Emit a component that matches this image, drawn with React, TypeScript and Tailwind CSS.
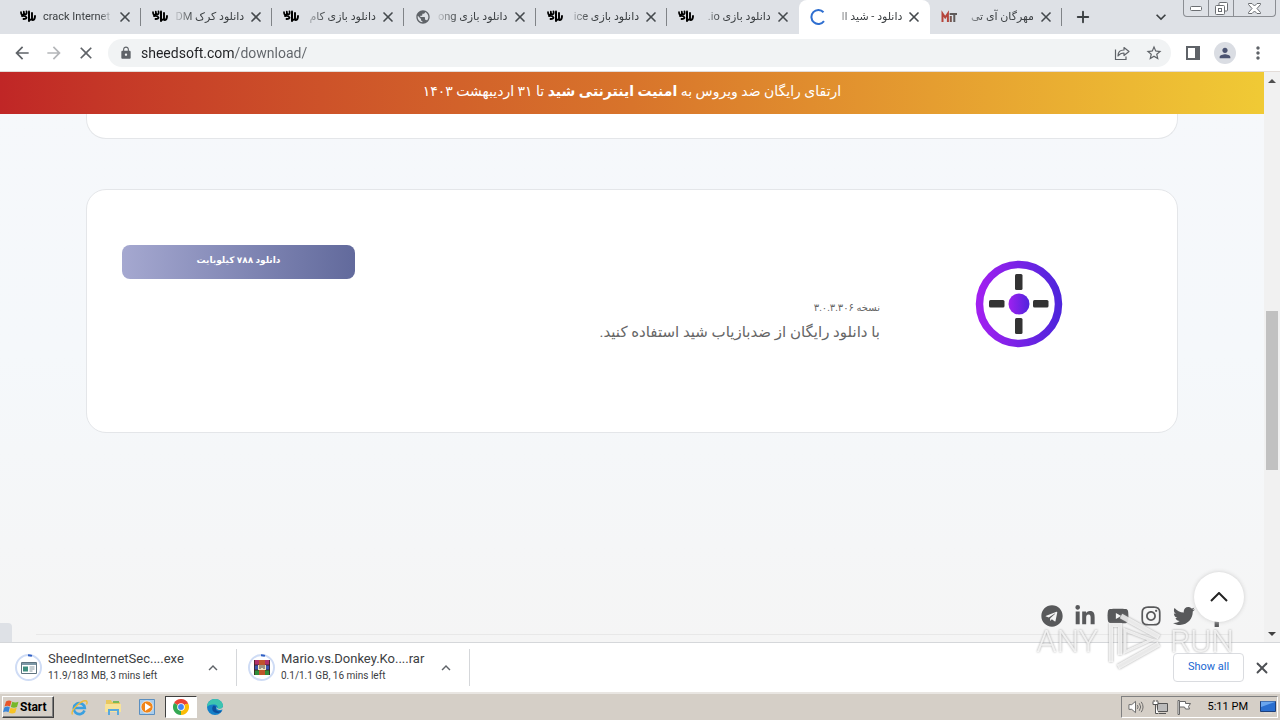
import React from "react";
import {
  MdArrowBack,
  MdArrowForward,
  MdClose,
  MdKeyboardArrowDown,
  MdKeyboardArrowUp,
  MdLock,
  MdMoreVert,
  MdPerson,
  MdPublic,
  MdStarBorder,
} from "react-icons/md";
import {
  FaFacebookF,
  FaInstagram,
  FaLinkedinIn,
  FaTelegram,
  FaTwitter,
  FaYoutube,
} from "react-icons/fa";
import { Plus, X } from "lucide-react";

const tabs = [
  { title: "crack Internet", icon: "yas", dir: "ltr" },
  { title: "دانلود کرک DM", icon: "yas", dir: "rtl" },
  { title: "دانلود بازی کام", icon: "yas", dir: "rtl" },
  { title: "دانلود بازی ong", icon: "globe", dir: "rtl" },
  { title: "دانلود بازی ice", icon: "yas", dir: "rtl" },
  { title: "دانلود بازی io.", icon: "yas", dir: "rtl" },
  { title: "دانلود - شید اا", icon: "spinner", dir: "rtl", active: true },
  { title: "مهرگان آی تی", icon: "mit", dir: "rtl" },
];

function TabIcon({ name }: { name: string }) {
  if (name === "globe") return <MdPublic className="size-4 shrink-0 text-[#5f6368]" />;
  if (name === "spinner") {
    return (
      <svg viewBox="0 0 16 16" className="size-4 shrink-0" fill="none">
        <path d="M13.5 3.2A7 7 0 1 0 14 12.2" stroke="#2f6fd0" strokeWidth="2" />
      </svg>
    );
  }
  if (name === "mit") {
    return (
      <svg viewBox="0 0 16 16" className="size-4 shrink-0" fill="none" strokeWidth="2">
        <path d="M1.500 13V4.500l2.700 4 2.700-4V13" stroke="#b5443a" />
        <path d="M9.800 7v6M9.800 4v2" stroke="#77544e" />
        <path d="M8.800 5H16M13.300 5v8" stroke="#5e5a5a" />
      </svg>
    );
  }
  return (
    <svg viewBox="0 0 16 16" className="size-4 shrink-0" fill="none" stroke="#000" strokeLinecap="round" strokeLinejoin="round">
      <path d="M1 3q0 3 1.800 2.800Q4.200 5.500 3.800 2.500q.2 3.300 2 2.800Q7 5 6.500 2.300" strokeWidth="1.700" />
      <path d="M2 7q3.500-.8 4.500 1.500Q6.500 10 3.500 10" strokeWidth="1.800" />
      <path d="M9 2.500v9.500" strokeWidth="2" />
      <path d="M9 10.500q2.500.8 3-1V4M12.500 11q2.500 0 2.500-4" strokeWidth="1.900" />
    </svg>
  );
}

function Tab({ title, icon, dir, active }: { title: string; icon: string; dir: string; active?: boolean }) {
  return (
    <div
      className={
        active
          ? "flex h-[34px] min-w-0 flex-1 items-center rounded-t-lg bg-white pl-[11px] pr-2"
          : "flex h-[34px] min-w-0 flex-1 items-center pl-[11px] pr-2"
      }
    >
      <TabIcon name={icon} />
      <span
        dir={dir}
        className={
          dir === "rtl"
            ? "ml-1 mr-1 min-w-0 flex-1 overflow-hidden whitespace-nowrap text-[11px] text-[#3c4043] [mask-image:linear-gradient(to_left,black_70%,transparent)]"
            : "ml-[7px] mr-1 min-w-0 flex-1 overflow-hidden whitespace-nowrap text-[11px] text-[#3c4043] [mask-image:linear-gradient(to_right,black_80%,transparent)]"
        }
      >
        {title}
      </span>
      <button aria-label="Close tab" className="shrink-0 text-[#45494d]">
        <X className="size-4" strokeWidth={2.5} />
      </button>
    </div>
  );
}

function TabStrip() {
  return (
    <div className="flex h-[34px] bg-[#dee1e6] pl-[9px]">
      <div className="flex w-[1053px] min-w-0">
        {tabs.map((tab, i) => (
          <React.Fragment key={i}>
            <Tab {...tab} />
            {i !== 5 && i !== 6 && <div className="-ml-px mt-2 h-[18px] w-px shrink-0 bg-[#808387]" />}
          </React.Fragment>
        ))}
      </div>
      <button aria-label="New tab" className="ml-3 text-[#3c4043]">
        <Plus className="size-[18px]" strokeWidth={2.5} />
      </button>
      <button aria-label="Search tabs" className="ml-auto mr-3 text-[#3c4043]">
        <MdKeyboardArrowDown className="size-5" />
      </button>
      <div className="mr-1 flex h-[17px] w-[93px] rounded-b border border-t-0 border-[#8b8e93] text-[#6b6e72]">
        <button aria-label="Minimize" className="flex w-[25px] items-center justify-center border-r border-[#8b8e93]">
          <svg viewBox="0 0 12 5" className="w-3" fill="#fff" stroke="currentColor">
            <rect x=".5" y=".5" width="11" height="4" rx="1" />
          </svg>
        </button>
        <button aria-label="Restore" className="flex w-[25px] items-center justify-center border-r border-[#8b8e93]">
          <svg viewBox="0 0 13 13" className="size-[13px]" fill="#fff" stroke="currentColor">
            <rect x="4" y=".5" width="8.500" height="8.500" rx="1" />
            <rect x=".5" y="3.500" width="9" height="9" rx="1" />
            <rect x="3.500" y="6.500" width="3" height="3" />
          </svg>
        </button>
        <button aria-label="Close" className="flex flex-1 items-center justify-center">
          <svg viewBox="0 0 13 11" className="w-[13px]" fill="#fff" stroke="currentColor">
            <path d="M.5.500h3.500L6.500 3 9 .5h3.500v1L9 5.500l3.500 4v1H9L6.500 8 4 10.500H.5v-1l3.500-4-3.500-4z" />
          </svg>
        </button>
      </div>
    </div>
  );
}

function Toolbar() {
  return (
    <div className="flex h-[38px] items-center border-b border-[#e3dcd8] bg-white pl-3 pr-3 text-[#5f6368]">
      <button aria-label="Back"><MdArrowBack className="size-5" /></button>
      <button aria-label="Forward" className="ml-3 text-[#b4b6b9]"><MdArrowForward className="size-5" /></button>
      <button aria-label="Stop" className="ml-3"><MdClose className="size-5" /></button>
      <div className="ml-3 flex h-7 flex-1 items-center rounded-full bg-[#f1f3f4] pl-[11px] pr-2">
        <MdLock className="size-[14px]" />
        <input
          aria-label="Address"
          className="ml-2 min-w-0 flex-1 bg-[linear-gradient(to_right,#202124_94px,#5f6368_94px)] bg-clip-text text-sm text-transparent outline-none"
          defaultValue="sheedsoft.com/download/"
        />
        <button aria-label="Share">
          <svg viewBox="0 0 16 16" className="size-4" fill="none" stroke="currentColor" strokeWidth="1.200">
            <path d="M1.500 4.500v10h10.500v-3" />
            <path d="M4 11c0-4 2-6 6-6V2.500l5 4-5 4V8C7 8 5.500 9 4 11z" strokeLinejoin="round" />
          </svg>
        </button>
        <button aria-label="Bookmark" className="ml-[15px]"><MdStarBorder className="size-[18px]" /></button>
      </div>
      <button aria-label="Side panel" className="ml-[15px]">
        <svg viewBox="0 0 14 14" className="size-[14px]" fill="none" stroke="currentColor" strokeWidth="2">
          <path d="M1 1h12v12H1z" />
          <path d="M11 1v12" strokeWidth="4" />
        </svg>
      </button>
      <button aria-label="Profile" className="ml-[14px] flex size-[22px] items-center justify-center rounded-full bg-[#dadde3] text-[#4b5371]">
        <MdPerson className="size-4" />
      </button>
      <button aria-label="Menu" className="ml-3"><MdMoreVert className="size-5" /></button>
    </div>
  );
}

function ProductCard() {
  return (
    <section className="mx-[86px] mt-[50px] flex h-[244px] items-start rounded-[20px] border border-[#e4e6e9] bg-white pl-[35px] pr-[114px]">
      <button className="mt-[55px] h-[34px] w-[233px] rounded-lg bg-gradient-to-r from-[#a5a8d0] to-[#626a9c] pb-[3px] text-[9px] font-bold text-white">
        دانلود ۷۸۸ کیلوبایت
      </button>
      <div dir="rtl" className="mt-[108px] flex-1 text-[#666]">
        <p className="text-[10px] leading-5">نسخه ۳.۰.۳.۳۰۶</p>
        <p className="text-[15px] leading-7">با دانلود رایگان از ضدبازیاب شید استفاده کنید.</p>
      </div>
      <svg viewBox="0 0 88 88" className="ml-[95px] mt-[70px] size-[88px]" fill="none">
        <defs>
          <linearGradient id="ring" x1="0" y1="0" x2="1" y2="0">
            <stop offset="0" stopColor="#a020f0" />
            <stop offset="1" stopColor="#4f25dc" />
          </linearGradient>
        </defs>
        <circle cx="44" cy="44" r="39.500" stroke="url(#ring)" strokeWidth="7.500" />
        <circle cx="44" cy="44" r="10.500" fill="url(#ring)" />
        <g fill="#333">
          <rect x="40" y="14" width="7.500" height="16" rx="1.500" />
          <rect x="40" y="58" width="7.500" height="16" rx="1.500" />
          <rect x="14" y="40" width="15.500" height="7.500" rx="1.500" />
          <rect x="58" y="40" width="15.500" height="7.500" rx="1.500" />
        </g>
      </svg>
    </section>
  );
}

function Footer() {
  const links = [
    { label: "Telegram", Icon: FaTelegram },
    { label: "LinkedIn", Icon: FaLinkedinIn },
    { label: "YouTube", Icon: FaYoutube },
    { label: "Instagram", Icon: FaInstagram },
    { label: "Twitter", Icon: FaTwitter },
    { label: "Facebook", Icon: FaFacebookF },
  ];
  return (
    <footer className="ml-9 mr-[35px] mb-[7px] mt-auto flex justify-end gap-[9px] border-b border-[#e8e8e8] pb-[6px] text-[#58595b]">
      {links.map(({ label, Icon }) => (
        <a key={label} href="#" aria-label={label} className="flex size-6 items-center justify-center">
          <Icon className="size-[22px]" />
        </a>
      ))}
    </footer>
  );
}

function Scrollbar() {
  return (
    <div className="flex w-4 flex-col items-center bg-[#f1f1f1]">
      <div className="flex h-[17px] items-center">
        <svg viewBox="0 0 8 4" className="w-2" fill="#505050"><path d="M0 4l4-4 4 4z" /></svg>
      </div>
      <div className="grow-[222]" />
      <div className="h-[159px] w-3 bg-[#c1c1c1]" />
      <div className="grow-[155]" />
      <div className="flex h-[17px] items-center">
        <svg viewBox="0 0 8 4" className="w-2" fill="#404040"><path d="M0 0l4 4 4-4z" /></svg>
      </div>
    </div>
  );
}

function Watermark() {
  return (
    <div className="pointer-events-none absolute bottom-[48px] right-[46px] flex items-center gap-2 text-[32px] font-light leading-none text-white/75 [filter:drop-shadow(0_0_1px_#888)]">
      ANY
      <svg viewBox="0 0 56 62" className="h-[62px] w-[56px]" fill="none" stroke="currentColor" strokeWidth="5">
        <path d="M5 52V15h9v30" strokeWidth="4" />
        <path d="M15 6l38 21" />
        <path d="M19 20v22l26-12z" strokeWidth="3" />
        <path d="M12 57l41-23" />
      </svg>
      RUN
    </div>
  );
}

function ExeIcon() {
  return (
    <svg viewBox="0 0 16 16" className="size-4">
      <path d="M.5 2.500h15v11H.5z" fill="#fff" stroke="#5f7480" />
      <path d="M1 3h14v2H1z" fill="#7d98a6" />
      <path d="M2 6.500h5v5H2z" fill="#3e8e7e" />
      <path d="M8.500 7h5M8.500 9h5M8.500 11h3" stroke="#8a9ba3" />
    </svg>
  );
}

function RarIcon() {
  return (
    <svg viewBox="0 0 16 16" className="size-4">
      <path d="M0 0h16v5H0z" fill="#b0306a" />
      <path d="M0 5h16v5H0z" fill="#3a55b0" />
      <path d="M0 10h16v5H0z" fill="#2f8d3a" />
      <path d="M0 5h16M0 10h16M.5 0v15M15.500 0v15" stroke="#3a2020" strokeWidth=".8" />
      <path d="M5 0h6v15H5z" fill="#c0552a" />
      <path d="M4 5h8v5H4z" fill="#f2e6c0" />
      <path d="M6 5v4M8 5v3M10 5v4" stroke="#444" />
    </svg>
  );
}

function Download({ name, status, children }: { name: string; status: string; children: React.ReactNode }) {
  return (
    <div className="my-[6px] flex w-[233px] items-center border-r border-[#d5d7da] pl-[11px]">
      <div className="relative flex size-[27px] items-center justify-center rounded-full border-2 border-[#cfdcf5]">
        {children}
        <svg viewBox="0 0 27 27" className="absolute -inset-0.5 size-[27px]" fill="none">
          <path d="M13 1.200a12.500 12.500 0 0 1 4 .7" stroke="#2f5fc4" strokeWidth="2" />
        </svg>
      </div>
      <div className="ml-[6px] flex-1 whitespace-nowrap text-[#3c4043]">
        <p className="text-[13px] leading-4">{name}</p>
        <p className="text-[10px] leading-[18px]">{status}</p>
      </div>
      <button aria-label="Download options" className="mr-[14px] text-[#5f6368]">
        <MdKeyboardArrowUp className="size-[18px]" />
      </button>
    </div>
  );
}

function DownloadShelf() {
  return (
    <div className="flex h-[50px] border-t border-[#d5d7da] bg-white pl-1">
      <Download name="SheedInternetSec....exe" status="11.9/183 MB, 3 mins left"><ExeIcon /></Download>
      <Download name="Mario.vs.Donkey.Ko....rar" status="0.1/1.1 GB, 16 mins left"><RarIcon /></Download>
      <div className="ml-auto flex items-center pr-[9px]">
        <button className="h-[29px] w-[71px] rounded border border-[#dadce0] text-[11px] text-[#1967d2]">Show all</button>
        <button aria-label="Close shelf" className="ml-[9px] text-[#4d5054]"><X className="size-[18px]" strokeWidth={2.5} /></button>
      </div>
    </div>
  );
}

function Taskbar() {
  return (
    <div className="flex h-[28px] items-center border-t-2 border-[#e9e6e2] bg-[#d5cfc7] pl-0.5 pr-0.5">
      <button className="flex h-[22px] w-[52px] items-center gap-px border border-b-[#404040] border-l-white border-r-[#404040] border-t-white text-xs font-bold text-black shadow-[inset_-1px_-1px_#808080]">
        <svg viewBox="0 0 16 16" className="size-4">
          <path d="M3 2.500q3-2 5.500-.3L7 7.500Q4.500 6 1.500 7.500z" fill="#e8562a" />
          <path d="M9.300 2.800q3 1.500 6.200 0L14 8q-3 1.500-6.200 0z" fill="#76b82a" />
          <path d="M1.300 8.500q3-1.800 5.500-.3l-1.300 5Q3 11.800 0 13.300z" fill="#3a86d8" />
          <path d="M7.500 8.800q3 1.500 6.200 0l-1.500 5q-3 1.500-6.200 0z" fill="#f7c325" />
        </svg>
        Start
      </button>
      <div className="ml-2 flex h-[22px] items-center">
        <button aria-label="Internet Explorer" className="flex w-[34px] justify-center">
          <svg viewBox="0 0 17 16" className="size-[17px]" fill="none">
            <path d="M13.500 11A5.500 5.500 0 1 1 13.800 8.500H4" stroke="#3aa0e0" strokeWidth="2.600" />
            <path d="M1.500 15C-1 11 11-.5 15.500 1.500c1 1 .5 2.500 0 3.500" stroke="#eebc3a" strokeWidth="1.400" />
          </svg>
        </button>
        <button aria-label="Explorer" className="flex w-[34px] justify-center">
          <svg viewBox="0 0 16 16" className="size-4">
            <path d="M1 1h5l1 2h8v10H1z" fill="#e9c85e" />
            <path d="M0 5h16v8H0z" fill="#f7e39a" />
            <path d="M3 16v-6h11v6h-2v-4H5v4z" fill="#5aa9dc" />
            <path d="M8 2h6v2H8z" fill="#79b85a" />
          </svg>
        </button>
        <button aria-label="Media Player" className="flex w-[34px] justify-center">
          <svg viewBox="0 0 16 16" className="size-4">
            <path d="M.5.500h15v15H.5z" fill="#a9cdec" stroke="#5b8fc0" />
            <circle cx="8" cy="8" r="6" fill="#f08519" stroke="#fff" strokeWidth=".6" />
            <path d="M6 4v8l6-4z" fill="#fff" />
          </svg>
        </button>
        <button aria-label="Chrome" className="ml-px flex h-[22px] w-8 items-center justify-center border border-b-white border-l-[#404040] border-r-white border-t-[#404040] bg-white">
          <svg viewBox="0 0 16 16" className="size-4">
            <path d="M8 8L1.070 4A8 8 0 0 1 14.930 4z" fill="#ea4335" />
            <path d="M8 8l6.930-4A8 8 0 0 1 8 16z" fill="#fbbc05" />
            <path d="M8 8v8A8 8 0 0 1 1.070 4z" fill="#34a853" />
            <path d="M8 4.300h6.930L15 5z" fill="#ea4335" />
            <circle cx="8" cy="8" r="3.800" fill="#fff" />
            <circle cx="8" cy="8" r="2.900" fill="#4285f4" />
          </svg>
        </button>
        <button aria-label="Edge" className="flex w-9 justify-center">
          <svg viewBox="0 0 16 16" className="size-4">
            <circle cx="8" cy="8" r="8" fill="#1580c8" />
            <path d="M0 8C0 3 4 0 8 0c5 0 8 3.500 8 6.500S13 11 10 10c2-3-1-5-4-4.500C3 5.500 1 6.500 0 8z" fill="#3cc4b0" />
            <path d="M6 7c-2 3 0 7 4 7 2 0 3.500-.5 5-2-3 1-7 0-6-3.500C9 7 7 6 6 7z" fill="#0d4f9c" />
            <path d="M9 8c.5 3 3.500 3.500 7 2.500V8c-2 2.500-5 2.500-7 0z" fill="#d5cfc7" />
          </svg>
        </button>
      </div>
      <div className="ml-auto flex h-[22px] items-center border border-b-white border-l-[#808080] border-r-white border-t-[#808080] pl-[6px] text-black">
        <svg viewBox="0 0 17 16" className="size-4" fill="#fff" stroke="#666">
          <path d="M1 5.500h3L8 2v12L4 10.500H1z" />
          <path d="M10 6q1.500 2 0 4M12 4q3 4 0 8M14 2.500q4 5.500 0 11" fill="none" />
        </svg>
        <svg viewBox="0 0 16 16" className="ml-2 size-4" fill="#fff" stroke="#555">
          <path d="M5.500 4.500h10v8h-10z" fill="#bbb" />
          <path d="M7 14.500h7M1 2.500v3h5v-3M3.500 5.500v9h3M2 1v2M5 1v2" />
        </svg>
        <svg viewBox="0 0 16 16" className="ml-2 size-4" fill="#fff" stroke="#666">
          <path d="M2 1.500h1.500v14H2z" />
          <path d="M3.500 2.500h6v2h5l-2 3 1 2.500h-4l-1-2h-5z" />
        </svg>
        <span className="ml-4 text-[11px]">5:11 PM</span>
        <svg viewBox="0 0 16 14" className="ml-3 mr-px w-4">
          <path d="M.5 1.500h15v10H.5z" fill="#2a6fd0" stroke="#1d3f7a" />
          <path d="M1 7l14-5v-.5H1z" fill="#6aa6ee" />
          <path d="M4 13h8" stroke="#ddd" />
        </svg>
      </div>
    </div>
  );
}

export default function App() {
  return (
    <div className="relative flex h-screen flex-col overflow-hidden font-['Roboto','DejaVu_Sans',sans-serif]">
      <TabStrip />
      <Toolbar />
      <div className="flex min-h-0 flex-1">
        <main className="relative flex min-w-0 flex-1 flex-col bg-gradient-to-b from-[#f6f8fb] via-[#f5f8fb] to-[#f5f5f5]">
          <div dir="rtl" className="h-[42px] bg-gradient-to-r from-[#c02626] via-[#d8742b] to-[#f0ca35] text-center text-[14px] leading-[38px] text-white">
            ارتقای رایگان ضد ویروس به <b>امنیت اینترنتی شید</b> تا ۳۱ اردیبهشت ۱۴۰۳
          </div>
          <div className="mx-[86px] h-[25px] rounded-b-[20px] border border-t-0 border-[#e4e6e9] bg-white" />
          <ProductCard />
          <Footer />
          <button aria-label="Back to top" className="absolute bottom-5 right-5 flex size-[50px] items-center justify-center rounded-full bg-white text-[#222] shadow-[0_0_4px_#ccc]">
            <svg viewBox="0 0 18 10" className="w-[18px]" fill="none" stroke="currentColor" strokeWidth="2">
              <path d="M1 9l8-8 8 8" />
            </svg>
          </button>
          <div className="absolute bottom-0 left-0 h-[19px] w-3 rounded-tr bg-[#dee1e6]" />
        </main>
        <Scrollbar />
      </div>
      <DownloadShelf />
      <Taskbar />
      <Watermark />
    </div>
  );
}
